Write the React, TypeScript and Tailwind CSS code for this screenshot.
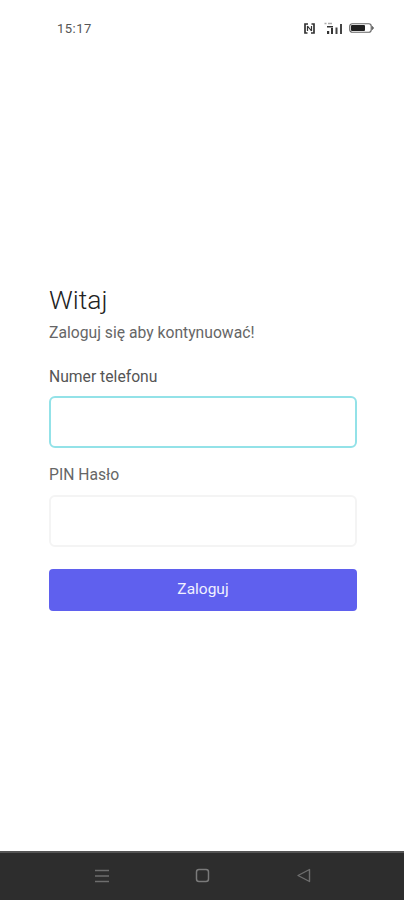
const font = "font-['Roboto','Inter',sans-serif]";

const StatusBar = () => (
  <div className="flex h-[56px] items-center justify-between pl-[57px] pr-[30px]">
    <span className="text-[13px] leading-none tracking-[0.5px] text-[#555]">15:17</span>
    <div className="flex items-center">
      {/* nfc */}
      <svg width="13" height="13" viewBox="0 0 13 13" className="mr-[8px]">
        <path d="M5 2H2v9h2.500M8 11h3V2H8.500" fill="none" stroke="#333" strokeWidth="1.700" />
        <path d="M4.500 4v5M8.500 4v5M4.500 4l4 5" fill="none" stroke="#333" strokeWidth="1.200" />
      </svg>
      {/* signal */}
      <svg width="20" height="13" viewBox="0 0 20 13" className="mr-[5px]">
        <path d="M0.500 1.500h2M4 1.500h4" stroke="#aaa" strokeWidth="1.300" />
        <path d="M3 4h6v1.600H3zM7 6h2v6H7zM3 9h2.200v3H3z" fill="#333" />
        <rect x="11.500" y="5.500" width="2" height="6.500" fill="#444" />
        <rect x="16" y="2" width="2" height="10" fill="#444" />
      </svg>
      {/* battery */}
      <svg width="25" height="12" viewBox="0 0 25 12">
        <rect x="0.750" y="1.750" width="21.500" height="8.500" rx="2.500" fill="#fff" stroke="#666" strokeWidth="1.200" />
        <rect x="2" y="3" width="14" height="6" rx="1" fill="#1f1f1f" />
        <path d="M23.500 4.500c1 .3 1 2.700 0 3z" fill="#666" stroke="#666" />
      </svg>
    </div>
  </div>
);

const NavBar = () => (
  <div className="flex h-[49px] items-center border-t-2 border-[#555] bg-[#2d2d2d] pb-[2px]">
    <div className="flex w-full items-center justify-between pl-[94px] pr-[93px]">
      <svg width="16" height="16" viewBox="0 0 16 16" stroke="#6e6e6e" strokeWidth="1.400">
        <path d="M1 2.500h14M1 8h14M1 13.500h14" />
      </svg>
      <svg width="15" height="15" viewBox="0 0 15 15" fill="none" stroke="#7a7a7a" strokeWidth="1.500" className="-ml-[1px]">
        <rect x="1.500" y="1.500" width="12" height="12" rx="2.500" />
      </svg>
      <svg width="15" height="15" viewBox="0 0 15 15" fill="none" stroke="#6e6e6e" strokeWidth="1.400">
        <path d="M13.500 1.500v12L2 7.500z" strokeLinejoin="round" />
      </svg>
    </div>
  </div>
);

export default function App() {
  return (
    <div className={`flex h-[900px] w-[404px] flex-col bg-white ${font}`}>
      <StatusBar />
      <div className="flex flex-1 flex-col pl-[49px] pr-[47px] pt-[227px]">
        <h1 className="text-[26.500px] font-light leading-[34px] text-[#222]">Witaj</h1>
        <p className="mt-[6px] text-[15.700px] leading-[20px] text-[#666]">Zaloguj się aby kontynuować!</p>

        <label className="mt-[24px] text-[15.700px] leading-[20px] text-[#555]">Numer telefonu</label>
        <input className="mt-[9px] h-[52px] w-full rounded-[6px] border-2 border-[#93e2e8] bg-white outline-none" />

        <label className="mt-[17px] text-[15.700px] leading-[20px] text-[#666]">PIN Hasło</label>
        <input className="mt-[10px] h-[52px] w-full rounded-[6px] border-2 border-[#f4f4f4] bg-white outline-none" />

        <button className="mt-[22px] h-[42px] w-full rounded-[4px] bg-[#5f60ee] text-[15.500px] text-[#f0f0ff]">
          Zaloguj
        </button>
      </div>
      <NavBar />
    </div>
  );
}
